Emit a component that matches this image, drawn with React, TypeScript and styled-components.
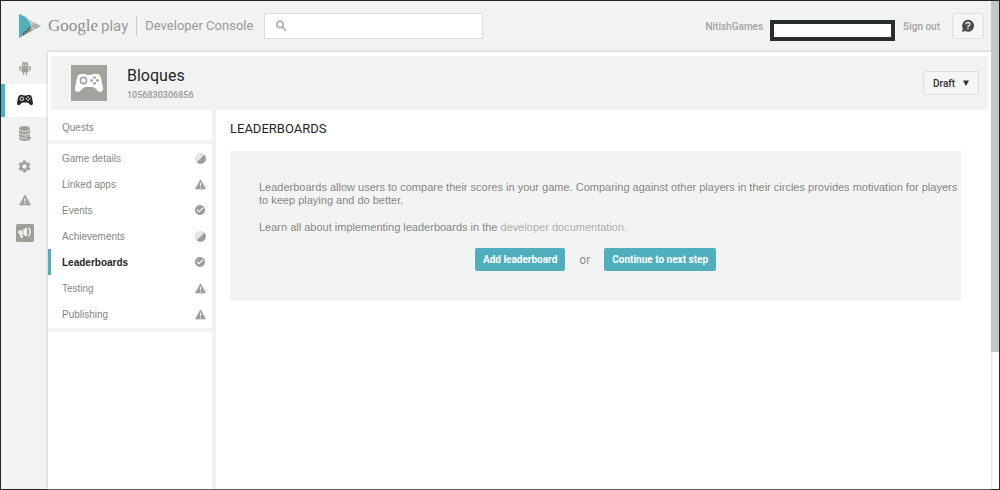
import React from 'react';
import styled, { createGlobalStyle } from 'styled-components';
import { MdSettings, MdCheckCircle } from 'react-icons/md';

const GlobalStyle = createGlobalStyle`
  * { box-sizing: border-box; }
  body {
    margin: 0;
    background: #fff;
    color: #8f908b;
    font-family: Roboto, Arial, sans-serif;
    font-size: 10px;
  }
  button, input, select { font: inherit; color: inherit; }
  h1, h2, p, ul { margin: 0; padding: 0; }
  a { color: inherit; text-decoration: none; }
`;

const Frame = styled.div`
  display: flex;
  min-height: 100vh;
  border: 1px solid #262626;
  background: #fff;
`;

const Console = styled.div`
  flex: 1;
  min-width: 0;
  display: flex;
  flex-direction: column;
  background: #f1f3f3;
`;

const ScrollTrack = styled.div`
  width: 8px;
  display: flex;
  flex-direction: column;
`;

const ScrollThumb = styled.div`
  flex: 0 0 72%;
  background: #c3c7c7;
`;

const TopBar = styled.header`
  display: flex;
  align-items: center;
  height: 50px;
  padding: 0 7px 0 17px;
`;

const Brand = styled.a`
  display: flex;
  align-items: center;
  color: #9b9a94;
`;

const GoogleWord = styled.span`
  margin-left: 6px;
  font-family: 'Liberation Serif', serif;
  font-size: 17px;
  line-height: 22px;
  color: #8f8e88;
`;

const PlayWord = styled.span`
  margin-left: 3px;
  font-size: 15px;
  line-height: 22px;
`;

const ConsoleWord = styled.span`
  margin-left: 8px;
  padding-left: 8px;
  border-left: 1px solid #c9cbca;
  font-size: 13px;
  line-height: 20px;
`;

const SearchBox = styled.label`
  display: flex;
  align-items: center;
  width: 219px;
  height: 26px;
  margin-left: 11px;
  padding-left: 10px;
  border: 1px solid #d9dcdb;
  background: #fff;
  color: #a8aaa7;
`;

const SearchInput = styled.input`
  flex: 1;
  min-width: 0;
  margin-left: 6px;
  border: 0;
  outline: 0;
  background: transparent;
`;

const Account = styled.div`
  display: flex;
  align-items: center;
  margin-left: auto;
  font-weight: 500;
  color: #a3a49f;
`;

const Email = styled.div`
  width: 125px;
  height: 21px;
  margin: 8px 8px 0 7px;
  border: 4px solid #2a2d2d;
  background: #fff;
`;

const HelpButton = styled.button`
  display: grid;
  place-items: center;
  width: 32px;
  height: 26px;
  margin-left: 12px;
  padding: 0;
  border: 1px solid #dfe1e1;
  border-radius: 2px;
  background: #f5f6f6;
`;

const Body = styled.div`
  flex: 1;
  display: flex;
`;

const Rail = styled.nav`
  width: 47px;
  display: flex;
  flex-direction: column;
`;

const RailLink = styled.a<{ $active?: boolean }>`
  display: grid;
  place-items: center;
  height: 33px;
  padding-right: ${(p) => (p.$active ? 4 : 0)}px;
  border-left: ${(p) => (p.$active ? '4px solid #4fafbd' : '0')};
  background: ${(p) => (p.$active ? '#fff' : 'transparent')};
  color: ${(p) => (p.$active ? '#262826' : '#a09f99')};
`;

const Panel = styled.div`
  flex: 1;
  min-width: 0;
  display: flex;
  flex-direction: column;
  margin-top: 1px;
  background: #fff;
  box-shadow: 0 0 3px #b8bbbb;
`;

const GameHeader = styled.div`
  display: flex;
  align-items: center;
  height: 54px;
  margin: 4px 3px 0;
  padding: 0 9px 0 20px;
  background: #f1f3f3;
`;

const GameTile = styled.div`
  display: grid;
  place-items: center;
  width: 36px;
  height: 36px;
  background: #a3a29c;
  color: #fff;
`;

const GameName = styled.div`
  margin-left: 20px;
`;

const GameTitle = styled.h1`
  font-size: 16px;
  font-weight: 400;
  line-height: 20px;
  color: #262626;
`;

const GameId = styled.p`
  margin-top: 3px;
  font-size: 9px;
  font-weight: 500;
  line-height: 12px;
  color: #969792;
`;

const StatusPicker = styled.label`
  display: flex;
  align-items: center;
  height: 24px;
  margin-left: auto;
  padding: 0 9px;
  border: 1px solid #dcdedd;
  border-radius: 2px;
  background: #f4f6f6;
  color: #303130;
`;

const StatusSelect = styled.select`
  appearance: none;
  width: 30px;
  padding: 0;
  border: 0;
  outline: 0;
  background: transparent;
  font-weight: 500;
`;

const Columns = styled.div`
  flex: 1;
  display: flex;
`;

const SideNav = styled.nav`
  width: 168px;
  border-right: 4px solid #f1f3f3;
  font-family: 'Liberation Sans', Arial, sans-serif;
`;

const NavGroup = styled.ul`
  list-style: none;
  padding: 1px 0;
  border-bottom: 4px solid #f1f3f3;
`;

const NavLink = styled.a<{ $active?: boolean; $tall?: boolean }>`
  display: flex;
  align-items: center;
  justify-content: space-between;
  height: ${(p) => (p.$tall ? 28 : 26)}px;
  padding: ${(p) => (p.$tall ? 5 : 0)}px 6px 0 11px;
  border-left: 3px solid ${(p) => (p.$active ? '#4fafbd' : 'transparent')};
  font-weight: ${(p) => (p.$active ? 700 : 400)};
  color: ${(p) => (p.$active ? '#262626' : '#858681')};
  svg { color: #9d9c96; }
`;

const Content = styled.main`
  flex: 1;
  min-width: 0;
  padding: 9px 30px 0 14px;
`;

const PageTitle = styled.h2`
  font-size: 13px;
  font-weight: 400;
  line-height: 20px;
  color: #262626;
`;

const IntroCard = styled.section`
  margin-top: 12px;
  padding: 30px 0;
  background: #f2f4f4;
`;

const IntroText = styled.p`
  margin-bottom: 14px;
  padding-left: 29px;
  font-family: 'Liberation Sans', Arial, sans-serif;
  font-size: 11px;
  line-height: 13px;
  color: #858681;
`;

const DocLink = styled.a`
  color: #acaeaa;
`;

const Actions = styled.div`
  display: flex;
  justify-content: center;
  align-items: center;
  gap: 14px;
  font-size: 12px;
`;

const PrimaryButton = styled.button`
  height: 23px;
  padding: 0 8px;
  border: 0;
  border-radius: 2px;
  background: #4fafbd;
  color: #fff;
  font-size: 10px;
  font-weight: bold;
`;

const PlayLogo = () => (
  <svg width="24" height="26" viewBox="0 0 24 26" aria-hidden="true">
    <path d="M1 1 23 13 1 25z" fill="#c9cbc9" />
    <path d="M1 1 8 4 13 12 10 17 3 23 1 25z" fill="#4fafbd" />
    <path d="M1 25 11 15 15 17z" fill="#8e8d88" />
    <path d="M5 21.500 13 13.500" stroke="#4b4b48" strokeWidth="1.500" strokeDasharray="2 1" />
    <path d="M16 10 23 13 17 16 13 13z" fill="#aeaea9" />
  </svg>
);

const SearchMark = () => (
  <svg width="12" height="12" viewBox="0 0 12 12" fill="none" stroke="currentColor" aria-hidden="true">
    <circle cx="5" cy="4.500" r="3.200" strokeWidth="1.500" />
    <path d="M7.300 7 11 10.700" strokeWidth="1.700" />
  </svg>
);

const Android = () => (
  <svg width="12" height="14" viewBox="0 0 12 14" aria-hidden="true">
    <path d="M2.500 4.500a3.500 3.200 0 0 1 7 0z" fill="currentColor" />
    <path d="M3.300.3 4.500 2M8.700.3 7.500 2" stroke="currentColor" strokeWidth=".7" />
    <rect x="2.500" y="5" width="7" height="6" rx=".8" fill="currentColor" />
    <path d="M1 5.800V9M11 5.800V9M4.500 10.500V13.200M7.500 10.500V13.200" stroke="currentColor" strokeWidth="1.500" strokeLinecap="round" />
    <circle cx="4.600" cy="3.300" r=".45" fill="#f1f3f3" />
    <circle cx="7.400" cy="3.300" r=".45" fill="#f1f3f3" />
  </svg>
);

const Warning = ({ size, label }: { size: number; label?: string }) => (
  <svg width={size} height={size} viewBox="0 0 12 12" aria-label={label} aria-hidden={!label}>
    <path d="M6 .8 11.600 11H.4Z" fill="currentColor" stroke="currentColor" strokeWidth=".6" strokeLinejoin="round" />
    <path d="M6 4.200V7.600M6 8.600V10" stroke="#f6f7f7" strokeWidth="1.300" />
  </svg>
);

const Gamepad = ({ size, hole }: { size: number; hole: string }) => (
  <svg width={size} height={(size * 18) / 28} viewBox="0 0 28 18" aria-hidden="true">
    <path
      d="M6 0H10Q11 1 14 1T18 0H22Q25 0 26 4L28 14Q28 18 25 18Q23 18 21 15Q19 13 17 13H11Q9 13 7 15Q5 18 3 18Q0 18 0 14L2 4Q3 0 6 0Z"
      fill="currentColor"
    />
    <circle cx="8.500" cy="6.500" r="3.100" fill="none" stroke={hole} strokeWidth="1.600" />
    <g fill={hole}>
      <circle cx="19.500" cy="3.600" r="1.400" />
      <circle cx="19.500" cy="9.400" r="1.400" />
      <circle cx="16.600" cy="6.500" r="1.400" />
      <circle cx="22.400" cy="6.500" r="1.400" />
    </g>
  </svg>
);

const Database = () => (
  <svg width="14" height="16" viewBox="0 0 14 16" aria-hidden="true">
    <path d="M1 3Q1 0 6.500 0T12 3V12Q12 15 6.500 15T1 12Z" fill="currentColor" />
    <path d="M1 3.500Q3 5.500 6.500 5.500T12 3.500M1 7Q3 9 6.500 9T12 7M1 10.500Q3 12.500 6.500 12.500" fill="none" stroke="#f1f3f3" strokeWidth=".8" />
    <path d="M9 8h3v3h2l-3.500 4.500L7 11h2z" fill="currentColor" stroke="#f1f3f3" strokeWidth=".5" />
  </svg>
);

const Megaphone = () => (
  <svg width="18" height="18" viewBox="0 0 18 18" aria-hidden="true">
    <rect width="18" height="18" rx="1.500" fill="#a09f99" />
    <path d="M2.500 6.500H6L11 3.500V12.500L6 10H5.800L7 14H4.800L3.700 10H2.500Z" fill="#f4f4f2" />
    <path d="M7.200 6.800V9.500" stroke="#a09f99" />
    <path d="M12.500 4Q15.800 8 12.500 12" fill="none" stroke="#f4f4f2" strokeWidth="1.500" />
  </svg>
);

const HelpMark = () => (
  <svg width="14" height="14" viewBox="0 0 14 14" aria-hidden="true">
    <path d="M7 .8a6 6 0 1 1-2.800 11.300L1 13 1.800 9.500A6 6 0 0 1 7 .8Z" fill="#4a4a47" />
    <path d="M5 5.300Q5 3.500 7 3.500T9 5.300Q9 6.300 7 7.400V8.400M7 9.300V10.500" fill="none" stroke="#eceeed" strokeWidth="1.300" />
  </svg>
);

const HalfDone = () => (
  <svg width="11" height="11" viewBox="0 0 11 11" aria-label="In progress">
    <circle cx="5.500" cy="5.500" r="5" fill="#e6e8e7" stroke="#d2d4d2" strokeWidth=".8" />
    <path d="M9.300 1.700A5.300 5.300 0 0 1 1.700 9.300Z" fill="currentColor" />
  </svg>
);

const CaretDown = () => (
  <svg width="6" height="6" viewBox="0 0 6 6" aria-hidden="true">
    <path d="M0 .5h6L3 6z" fill="currentColor" />
  </svg>
);

type Status = 'half' | 'warn' | 'done';

const StatusIcon = ({ status }: { status: Status }) => {
  if (status === 'half') return <HalfDone />;
  if (status === 'warn') return <Warning size={11} label="Needs attention" />;
  return <MdCheckCircle size={12} aria-label="Complete" />;
};

const sections: { label: string; status: Status; active?: boolean }[] = [
  { label: 'Game details', status: 'half' },
  { label: 'Linked apps', status: 'warn' },
  { label: 'Events', status: 'done' },
  { label: 'Achievements', status: 'half' },
  { label: 'Leaderboards', status: 'done', active: true },
  { label: 'Testing', status: 'warn' },
  { label: 'Publishing', status: 'warn' },
];

export default function App() {
  return (
    <>
      <GlobalStyle />
      <Frame>
        <Console>
          <TopBar>
            <Brand href="#">
              <PlayLogo />
              <GoogleWord>Google</GoogleWord>
              <PlayWord>play</PlayWord>
              <ConsoleWord>Developer Console</ConsoleWord>
            </Brand>
            <SearchBox>
              <SearchMark />
              <SearchInput type="text" aria-label="Search" />
            </SearchBox>
            <Account>
              <span>NitishGames</span>
              <Email />
              <a href="#">Sign out</a>
              <HelpButton aria-label="Help">
                <HelpMark />
              </HelpButton>
            </Account>
          </TopBar>
          <Body>
            <Rail>
              <RailLink href="#" aria-label="Applications"><Android /></RailLink>
              <RailLink href="#" aria-label="Games" $active><Gamepad size={16} hole="#fff" /></RailLink>
              <RailLink href="#" aria-label="Reports"><Database /></RailLink>
              <RailLink href="#" aria-label="Settings"><MdSettings size={15} /></RailLink>
              <RailLink href="#" aria-label="Alerts"><Warning size={12} /></RailLink>
              <RailLink href="#" aria-label="Announcements"><Megaphone /></RailLink>
            </Rail>
            <Panel>
              <GameHeader>
                <GameTile><Gamepad size={28} hole="#a3a29c" /></GameTile>
                <GameName>
                  <GameTitle>Bloques</GameTitle>
                  <GameId>1056830306856</GameId>
                </GameName>
                <StatusPicker>
                  <StatusSelect aria-label="Status" defaultValue="Draft">
                    <option>Draft</option>
                  </StatusSelect>
                  <CaretDown />
                </StatusPicker>
              </GameHeader>
              <Columns>
                <SideNav>
                  <NavGroup>
                    <li><NavLink href="#" $tall>Quests</NavLink></li>
                  </NavGroup>
                  <NavGroup>
                    {sections.map((s) => (
                      <li key={s.label}>
                        <NavLink href="#" $active={s.active}>
                          {s.label}
                          <StatusIcon status={s.status} />
                        </NavLink>
                      </li>
                    ))}
                  </NavGroup>
                </SideNav>
                <Content>
                  <PageTitle>LEADERBOARDS</PageTitle>
                  <IntroCard>
                    <IntroText>
                      Leaderboards allow users to compare their scores in your game. Comparing against
                      other players in their circles provides motivation for players to keep playing
                      and do better.
                    </IntroText>
                    <IntroText>
                      Learn all about implementing leaderboards in the{' '}
                      <DocLink href="#">developer documentation.</DocLink>
                    </IntroText>
                    <Actions>
                      <PrimaryButton>Add leaderboard</PrimaryButton>
                      <span>or</span>
                      <PrimaryButton>Continue to next step</PrimaryButton>
                    </Actions>
                  </IntroCard>
                </Content>
              </Columns>
            </Panel>
          </Body>
        </Console>
        <ScrollTrack>
          <ScrollThumb />
        </ScrollTrack>
      </Frame>
    </>
  );
}
